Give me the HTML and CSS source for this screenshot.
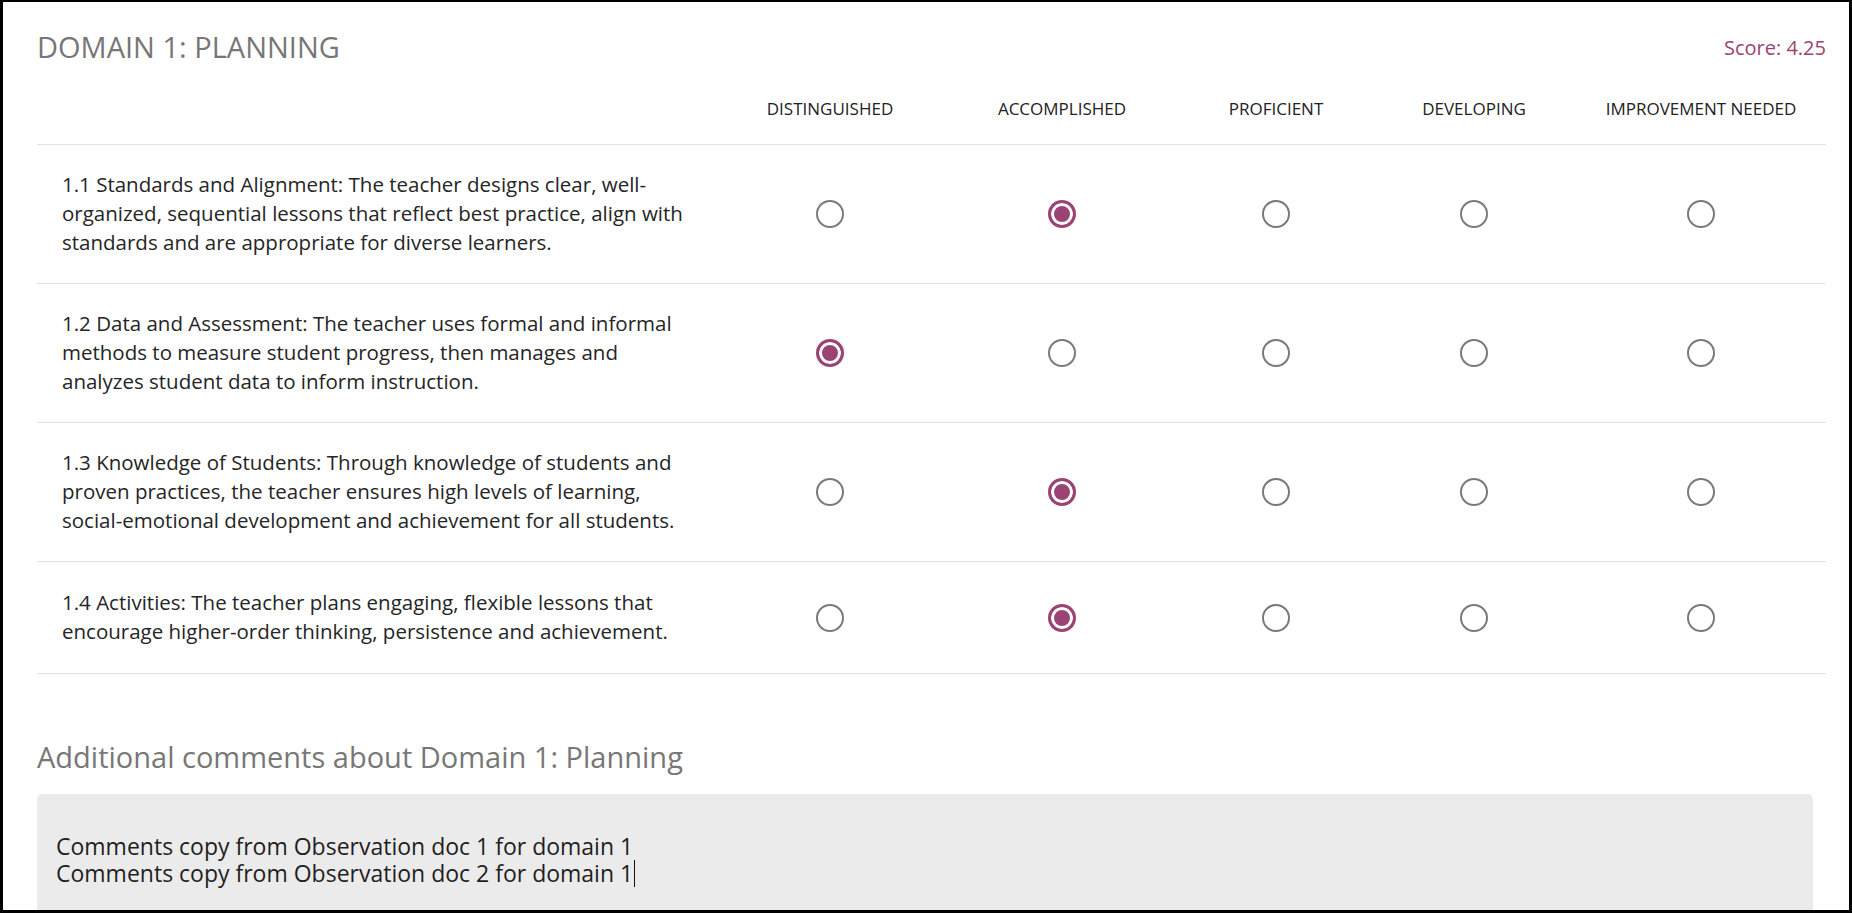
FILE: index.html
```html
<!DOCTYPE html>
<html lang="en">
<head>
<meta charset="utf-8">
<title>Domain 1: Planning</title>
<link rel="stylesheet" href="styles.css">
</head>
<body>
<div class="frame">
  <div class="domain-head">
    <h1 class="domain-title">DOMAIN 1: PLANNING</h1>
    <div class="score">Score: 4.25</div>
  </div>

  <div class="rubric">
    <div class="rubric-row rubric-header">
      <div class="cell-label"></div>
      <div class="cell-level">DISTINGUISHED</div>
      <div class="cell-level">ACCOMPLISHED</div>
      <div class="cell-level">PROFICIENT</div>
      <div class="cell-level">DEVELOPING</div>
      <div class="cell-level">IMPROVEMENT NEEDED</div>
    </div>

    <div class="rubric-row">
      <div class="cell-label">1.1 Standards and Alignment: The teacher designs clear, well-<br>organized, sequential lessons that reflect best practice, align with<br>standards and are appropriate for diverse learners.</div>
      <div class="cell-radio"><input type="radio" name="r11" aria-label="Distinguished"></div>
      <div class="cell-radio"><input type="radio" name="r11" aria-label="Accomplished" checked></div>
      <div class="cell-radio"><input type="radio" name="r11" aria-label="Proficient"></div>
      <div class="cell-radio"><input type="radio" name="r11" aria-label="Developing"></div>
      <div class="cell-radio"><input type="radio" name="r11" aria-label="Improvement needed"></div>
    </div>

    <div class="rubric-row">
      <div class="cell-label">1.2 Data and Assessment: The teacher uses formal and informal<br>methods to measure student progress, then manages and<br>analyzes student data to inform instruction.</div>
      <div class="cell-radio"><input type="radio" name="r12" aria-label="Distinguished" checked></div>
      <div class="cell-radio"><input type="radio" name="r12" aria-label="Accomplished"></div>
      <div class="cell-radio"><input type="radio" name="r12" aria-label="Proficient"></div>
      <div class="cell-radio"><input type="radio" name="r12" aria-label="Developing"></div>
      <div class="cell-radio"><input type="radio" name="r12" aria-label="Improvement needed"></div>
    </div>

    <div class="rubric-row">
      <div class="cell-label">1.3 Knowledge of Students: Through knowledge of students and<br>proven practices, the teacher ensures high levels of learning,<br>social-emotional development and achievement for all students.</div>
      <div class="cell-radio"><input type="radio" name="r13" aria-label="Distinguished"></div>
      <div class="cell-radio"><input type="radio" name="r13" aria-label="Accomplished" checked></div>
      <div class="cell-radio"><input type="radio" name="r13" aria-label="Proficient"></div>
      <div class="cell-radio"><input type="radio" name="r13" aria-label="Developing"></div>
      <div class="cell-radio"><input type="radio" name="r13" aria-label="Improvement needed"></div>
    </div>

    <div class="rubric-row rubric-row-short">
      <div class="cell-label">1.4 Activities: The teacher plans engaging, flexible lessons that<br>encourage higher-order thinking, persistence and achievement.</div>
      <div class="cell-radio"><input type="radio" name="r14" aria-label="Distinguished"></div>
      <div class="cell-radio"><input type="radio" name="r14" aria-label="Accomplished" checked></div>
      <div class="cell-radio"><input type="radio" name="r14" aria-label="Proficient"></div>
      <div class="cell-radio"><input type="radio" name="r14" aria-label="Developing"></div>
      <div class="cell-radio"><input type="radio" name="r14" aria-label="Improvement needed"></div>
    </div>
  </div>

  <h2 class="comments-title">Additional comments about Domain 1: Planning</h2>
  <div class="comments-box">
    <div class="comment-line">Comments copy from Observation doc 1 for domain 1</div>
    <div class="comment-line">Comments copy from Observation doc 2 for domain 1<span class="caret"></span></div>
  </div>
</div>
</body>
</html>
```

FILE: styles.css
```css
* {
  box-sizing: border-box;
}

html, body {
  margin: 0;
  padding: 0;
  background: #fff;
}

body {
  font-family: "Open Sans", "Noto Sans", "DejaVu Sans", sans-serif;
  color: #252525;
}

.frame {
  height: 913px;
  overflow: hidden;
  border: 3px solid #000;
  border-top-width: 2px;
  padding: 0 23px 0 34px;
}

.domain-head {
  display: flex;
  justify-content: space-between;
  align-items: center;
  height: 40px;
  margin-top: 25px;
}

.domain-title {
  margin: 0;
  font-size: 29px;
  line-height: 40px;
  font-weight: 400;
  color: #777;
}

.score {
  font-size: 20px;
  color: #9b4373;
}

.rubric-row {
  display: grid;
  grid-template-columns: 679px 228px 236px 192px 204px 250px;
  align-items: center;
  border-bottom: 1px solid #e2e2e2;
}

.rubric-header {
  padding: 32px 0 25px;
}

.cell-level {
  text-align: center;
  font-size: 17px;
  line-height: 20px;
  color: #222;
}

.cell-label {
  padding: 25px 0 26px 25px;
  font-size: 20.5px;
  line-height: 29px;
  color: #252525;
}

.rubric-row-short .cell-label {
  padding: 26px 0 27px 25px;
}

.rubric-header .cell-label {
  padding: 0;
}

.cell-radio {
  display: flex;
  justify-content: center;
  align-items: center;
}

.cell-radio input {
  appearance: none;
  -webkit-appearance: none;
  margin: 0;
  width: 28px;
  height: 28px;
  border: 2px solid #7a7a7a;
  border-radius: 50%;
  background: #fff;
}

.cell-radio input:checked {
  border: 3px solid #9b4373;
  background: #9b4373;
  box-shadow: inset 0 0 0 3px #fff;
}

.comments-title {
  margin: 66px 0 20px;
  font-size: 29px;
  line-height: 34px;
  font-weight: 400;
  color: #777;
}

.comments-box {
  margin-right: 13px;
  height: 200px;
  padding: 39px 19px;
  background: #ebebeb;
  border-radius: 5px;
  font-size: 23px;
  color: #1f1f1f;
}

.comment-line {
  line-height: 27px;
  height: 27px;
}

.caret {
  display: inline-block;
  width: 1px;
  height: 27px;
  margin-left: 1px;
  vertical-align: top;
  background: #111;
}
```
